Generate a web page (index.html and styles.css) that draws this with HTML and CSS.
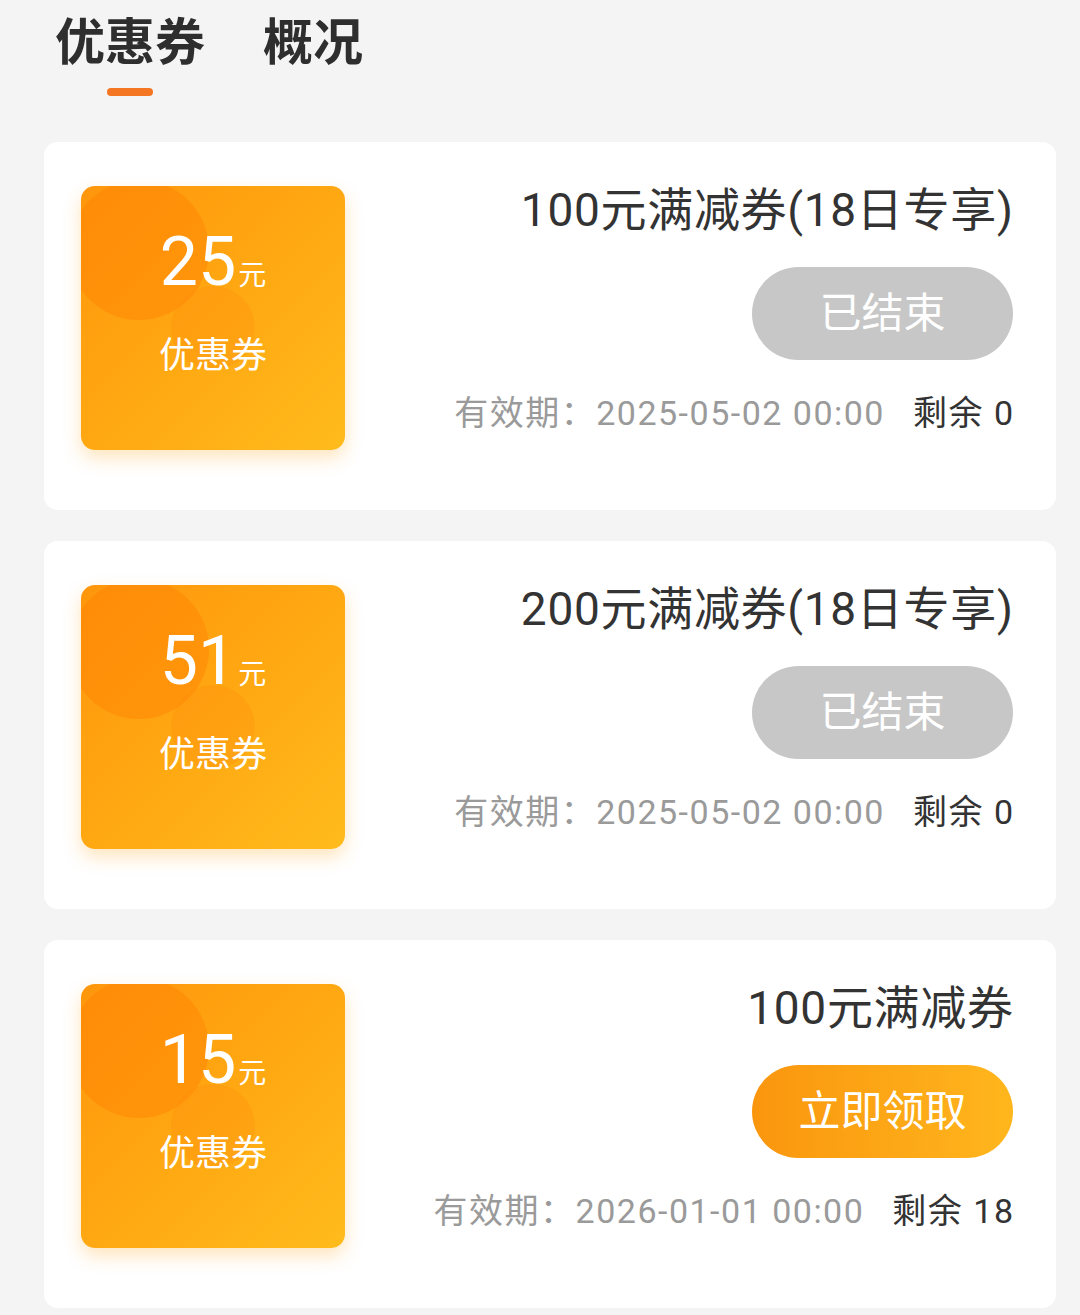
FILE: index.html
```html
<!DOCTYPE html>
<html lang="zh-CN">
<head>
    <meta charset="UTF-8">
    <meta name="viewport" content="width=device-width, initial-scale=1.0">
    <title>优惠券</title>
    <link rel="stylesheet" href="styles.css">
</head>
<body>
    <!-- Tabs -->
    <div class="tabs">
        <div class="tab active">优惠券<span class="tab-line"></span></div>
        <div class="tab">概况</div>
    </div>

    <!-- Coupon list -->
    <div class="coupon-list">
        <div class="coupon">
            <div class="coupon-badge">
                <span class="circle big"></span>
                <span class="circle small"></span>
                <div class="amount">25<span class="unit">元</span></div>
                <div class="badge-label">优惠券</div>
            </div>
            <div class="coupon-info">
                <div class="coupon-title">100元满减券(18日专享)</div>
                <button class="coupon-btn ended">已结束</button>
                <div class="coupon-meta">
                    <span class="expire">有效期：2025-05-02 00:00</span>
                    <span class="left">剩余 0</span>
                </div>
            </div>
        </div>

        <div class="coupon">
            <div class="coupon-badge">
                <span class="circle big"></span>
                <span class="circle small"></span>
                <div class="amount">51<span class="unit">元</span></div>
                <div class="badge-label">优惠券</div>
            </div>
            <div class="coupon-info">
                <div class="coupon-title">200元满减券(18日专享)</div>
                <button class="coupon-btn ended">已结束</button>
                <div class="coupon-meta">
                    <span class="expire">有效期：2025-05-02 00:00</span>
                    <span class="left">剩余 0</span>
                </div>
            </div>
        </div>

        <div class="coupon">
            <div class="coupon-badge">
                <span class="circle big"></span>
                <span class="circle small"></span>
                <div class="amount">15<span class="unit">元</span></div>
                <div class="badge-label">优惠券</div>
            </div>
            <div class="coupon-info">
                <div class="coupon-title">100元满减券</div>
                <button class="coupon-btn">立即领取</button>
                <div class="coupon-meta">
                    <span class="expire">有效期：2026-01-01 00:00</span>
                    <span class="left">剩余 18</span>
                </div>
            </div>
        </div>
    </div>
</body>
</html>
```

FILE: styles.css
```css
/* Page */
body {
    margin: 0;
    padding: 0;
    background-color: #f4f4f4;
    font-family: Roboto, "Noto Sans CJK SC", sans-serif;
    color: #333;
}

/* Tabs */
.tabs {
    display: flex;
    gap: 58px;
    padding: 8px 0 0 55px;
}

.tab {
    display: flex;
    flex-direction: column;
    align-items: center;
    font-family: "Noto Sans CJK SC", sans-serif;
    font-size: 50px;
    font-weight: 700;
    line-height: 60px;
    color: #2e2e2e;
}

.tab-line {
    width: 46px;
    height: 8px;
    margin-top: 20px;
    border-radius: 4px;
    background-color: #f47522;
}

/* Coupon list */
.coupon-list {
    display: flex;
    flex-direction: column;
    gap: 31px;
    width: 1012px;
    margin: 46px 0 0 44px;
}

.coupon {
    display: flex;
    justify-content: space-between;
    padding: 44px 43px 60px 37px;
    background: #fff;
    border-radius: 14px;
}

/* Orange square */
.coupon-badge {
    position: relative;
    overflow: hidden;
    display: flex;
    flex-direction: column;
    align-items: center;
    width: 264px;
    height: 264px;
    padding-top: 36px;
    box-sizing: border-box;
    border-radius: 14px;
    background: linear-gradient(135deg, #ff960c 0%, #ffa812 50%, #ffbb1c 100%);
    box-shadow: 0 8px 18px rgba(255, 170, 40, 0.3);
    color: #fff;
}

.circle {
    position: absolute;
    border-radius: 50%;
}

.circle.big {
    left: -12px;
    top: -6px;
    width: 140px;
    height: 140px;
    background: rgba(255, 120, 0, 0.35);
}

.circle.small {
    left: 90px;
    top: 100px;
    width: 84px;
    height: 84px;
    background: rgba(255, 135, 10, 0.25);
}

.amount {
    position: relative;
    font-size: 68px;
    line-height: 80px;
}

.unit {
    font-family: "Noto Sans CJK SC", sans-serif;
    font-size: 28px;
    margin-left: 2px;
}

.badge-label {
    position: relative;
    margin-top: 18px;
    font-family: "Noto Sans CJK SC", sans-serif;
    font-size: 36px;
    line-height: 43px;
}

/* Right side */
.coupon-info {
    display: flex;
    flex-direction: column;
    align-items: flex-end;
}

.coupon-title {
    font-size: 46px;
    line-height: 48px;
    letter-spacing: 0.7px;
    margin-right: -0.7px;
    color: #333;
}

.coupon-btn {
    width: 261px;
    height: 93px;
    margin-top: 33px;
    padding: 0 0 8px;
    border: none;
    border-radius: 47px;
    background: linear-gradient(90deg, #fa960e, #ffb61d);
    font-family: "Noto Sans CJK SC", sans-serif;
    font-size: 42px;
    color: #fff;
}

.coupon-btn.ended {
    background: #c7c7c7;
}

.coupon-meta {
    display: flex;
    gap: 28px;
    margin-top: 33px;
    margin-right: -1.5px;
    font-size: 34px;
    line-height: 40px;
    letter-spacing: 1.5px;
}

.expire {
    color: #9a9a9a;
}

.left {
    color: #333;
}
```
